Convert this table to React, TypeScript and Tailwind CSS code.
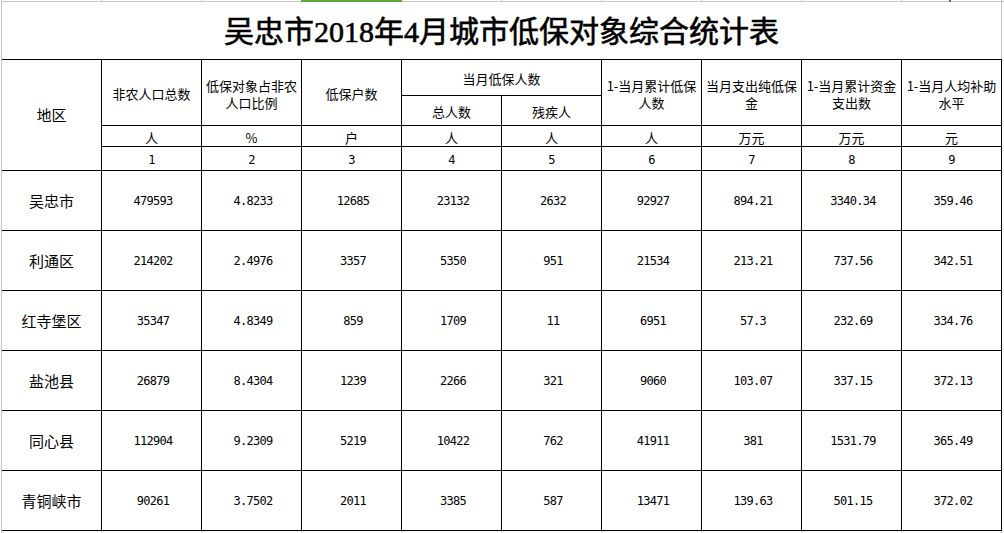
import React from "react";

const CJK = { fontFamily: '"Noto Sans CJK SC", "Noto Sans", sans-serif' };
const NUM = { fontFamily: '"DejaVu Sans Mono", "Liberation Mono", monospace' };

const rows: string[][] = [
  ["吴忠市", "479593", "4.8233", "12685", "23132", "2632", "92927", "894.21", "3340.34", "359.46"],
  ["利通区", "214202", "2.4976", "3357", "5350", "951", "21534", "213.21", "737.56", "342.51"],
  ["红寺堡区", "35347", "4.8349", "859", "1709", "11", "6951", "57.3", "232.69", "334.76"],
  ["盐池县", "26879", "8.4304", "1239", "2266", "321", "9060", "103.07", "337.15", "372.13"],
  ["同心县", "112904", "9.2309", "5219", "10422", "762", "41911", "381", "1531.79", "365.49"],
  ["青铜峡市", "90261", "3.7502", "2011", "3385", "587", "13471", "139.63", "501.15", "372.02"],
];

const units = ["人", "%", "户", "人", "人", "人", "万元", "万元", "元"];

function Ticks() {
  return (
    <div className="flex h-full">
      {Array.from({ length: 10 }).map((_, i) => (
        <div key={i} className="w-[100px] h-full border-r border-[#c6c6c6]" />
      ))}
    </div>
  );
}

function Cell({ children, className = "" }: { children?: React.ReactNode; className?: string }) {
  return (
    <div className={`bg-white flex items-center justify-center text-center text-black ${className}`}>
      {children}
    </div>
  );
}

function Head({ lines, className = "" }: { lines: string[]; className?: string }) {
  return (
    <Cell className={`text-[13px] leading-[17px] whitespace-nowrap pt-[2px] ${className}`}>
      <div style={CJK}>
        {lines.map((l, i) => (
          <div key={i}>{l}</div>
        ))}
      </div>
    </Cell>
  );
}

export default function App() {
  return (
    <div className="relative w-[1004px] h-[533px] bg-white overflow-hidden">
      {/* top gridline strip */}
      <div className="h-[2px] flex">
        <div className="w-px h-px" />
        <div className="flex-1 h-[2px] border-b border-[#c6c6c6] flex">
          <div className="w-px h-px bg-[#c6c6c6]" />
          <div className="h-px">
            <Ticks />
          </div>
        </div>
      </div>
      <div className="absolute left-[301px] top-0 w-[101px] h-[2px] bg-[#5fa83c]" />
      <div className="absolute left-[949px] top-0 w-[2px] h-[2px] bg-[#6b6b6b]" />

      <div className="flex">
        <div className="w-px" />
        <div className="w-[1001px] border-l border-[#c6c6c6] flex flex-col">
          {/* title */}
          <div className="h-[57px] border-r border-[#c6c6c6] flex items-center justify-center pt-[3px]">
            <span
              className="text-[30px] leading-[34px] font-normal text-black whitespace-nowrap [-webkit-text-stroke:0.6px_#000]"
              style={{ fontFamily: '"Liberation Serif", "Noto Sans CJK SC", serif' }}
            >
              吴忠市2018年4月城市低保对象综合统计表
            </span>
          </div>

          {/* table */}
          <div className="border-t border-r border-b border-black">
            <div className="grid grid-cols-[repeat(10,99px)] grid-rows-[35px_29px_20px_23px_repeat(6,59px)] gap-px bg-black">
              <Cell className="row-span-4 text-[15px]">
                <span style={CJK}>地区</span>
              </Cell>
              <Head className="row-span-2" lines={["非农人口总数"]} />
              <Head className="row-span-2" lines={["低保对象占非农", "人口比例"]} />
              <Head className="row-span-2" lines={["低保户数"]} />
              <Head className="col-span-2" lines={["当月低保人数"]} />
              <Head className="row-span-2" lines={["1-当月累计低保", "人数"]} />
              <Head className="row-span-2" lines={["当月支出纯低保", "金"]} />
              <Head className="row-span-2" lines={["1-当月累计资金", "支出数"]} />
              <Head className="row-span-2" lines={["1-当月人均补助", "水平"]} />
              <Head lines={["总人数"]} />
              <Head lines={["残疾人"]} />

              {units.map((u, i) => (
                <Cell key={"u" + i} className="text-[13px] leading-none pt-[2px]">
                  <span style={CJK}>{u}</span>
                </Cell>
              ))}
              {units.map((_, i) => (
                <Cell key={"n" + i} className="text-[12px] leading-none pt-[2px] tracking-[-0.7px]">
                  <span style={NUM}>{i + 1}</span>
                </Cell>
              ))}

              {rows.map((r, ri) =>
                r.map((v, ci) =>
                  ci === 0 ? (
                    <Cell key={ri + "-" + ci} className="text-[15px] leading-none">
                      <span style={CJK}>{v}</span>
                    </Cell>
                  ) : (
                    <Cell key={ri + "-" + ci} className="text-[12px] leading-none pl-[3px] tracking-[-0.7px]">
                      <span style={NUM}>{v}</span>
                    </Cell>
                  )
                )
              )}
            </div>
          </div>

          {/* bottom gridline strip */}
          <div className="h-[2px] flex">
            <Ticks />
          </div>
        </div>
      </div>
    </div>
  );
}
